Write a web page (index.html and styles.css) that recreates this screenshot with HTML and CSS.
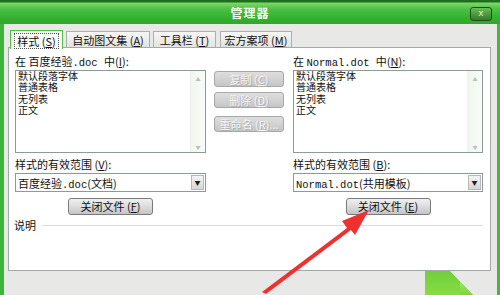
FILE: index.html
```html
<!DOCTYPE html>
<html>
<head>
    <meta charset="utf-8">
    <title>管理器</title>
    <link rel="stylesheet" href="styles.css">
</head>
<body>
    <div class="window">
        <div class="titlebar">
            <span class="title">管理器</span>
            <span class="close">x</span>
        </div>

        <!-- tabs -->
        <div class="tabs">
            <div class="tab active t1"><span class="focus">样式 (<u>S</u>)</span></div>
            <div class="tab t2">自动图文集 (<u>A</u>)</div>
            <div class="tab t3">工具栏 (<u>T</u>)</div>
            <div class="tab t4">宏方案项 (<u>M</u>)</div>
        </div>

        <div class="panel">
            <div class="grid">
                <div class="label">在 百度经验<span class="mono">.doc </span>中(<u>I</u>):</div>
                <div></div>
                <div class="label">在 <span class="mono">Normal.dot </span>中(<u>N</u>):</div>

                <div class="listbox">
                    <ul>
                        <li>默认段落字体</li>
                        <li>普通表格</li>
                        <li>无列表</li>
                        <li>正文</li>
                    </ul>
                    <div class="scroll"><span>&#9650;</span><span>&#9660;</span></div>
                </div>
                <div class="mid-buttons">
                    <button class="btn" disabled>复制 (<u>C</u>)</button>
                    <button class="btn" disabled>删除 (<u>D</u>)</button>
                    <button class="btn" disabled>重命名 (<u>R</u>)...</button>
                </div>
                <div class="listbox">
                    <ul>
                        <li>默认段落字体</li>
                        <li>普通表格</li>
                        <li>无列表</li>
                        <li>正文</li>
                    </ul>
                    <div class="scroll"><span>&#9650;</span><span>&#9660;</span></div>
                </div>

                <div class="label low">样式的有效范围 (<u>V</u>):</div>
                <div></div>
                <div class="label low">样式的有效范围 (<u>B</u>):</div>

                <div class="combo">
                    <span class="value">百度经验<span class="mono">.doc</span>(文档)</span>
                    <span class="drop">&#9660;</span>
                </div>
                <div></div>
                <div class="combo">
                    <span class="value"><span class="mono">Normal.dot</span>(共用模板)</span>
                    <span class="drop">&#9660;</span>
                </div>

                <div class="center"><button class="btn wide">关闭文件 (<u>F</u>)</button></div>
                <div></div>
                <div class="center"><button class="btn wide">关闭文件 (<u>E</u>)</button></div>
            </div>

            <div class="desc">
                <span>说明</span>
                <span class="rule"></span>
            </div>
        </div>

        <div class="bottom">
            <div class="other"></div>
        </div>
    </div>

    <!-- red pointer arrow -->
    <svg class="arrow" width="500" height="295" viewBox="0 0 500 295">
        <path d="M262 292 L347 228 L342 221 L369 210 L355 235 L351 230 L266 294 Z" fill="#ee3030"/>
    </svg>
</body>
</html>
```

FILE: styles.css
```css
body {
    margin: 0;
    width: 500px;
    height: 295px;
    overflow: hidden;
    font-family: "Noto Sans CJK SC", "Liberation Sans", sans-serif;
    font-size: 11px;
    color: #111;
}

u {
    text-decoration: underline;
}

.window {
    height: 295px;
    background-color: #e8e8e6;
    border-left: 4px solid #3fb43a;
    border-right: 3px solid #44b83c;
    box-sizing: border-box;
    display: flex;
    flex-direction: column;
}

/* Title bar */
.titlebar {
    height: 24px;
    flex: none;
    margin: 0 -3px 0 -4px;
    background: linear-gradient(to bottom, #1d6e1d 0, #1d6e1d 2px, #7ed86a 3px, #4cc043 9px, #35b030 18px, #2ea82a 24px);
    display: flex;
    align-items: center;
    justify-content: center;
    position: relative;
}

.title {
    color: #f4fff0;
    font-size: 12px;
    font-weight: bold;
    letter-spacing: 1px;
}

.close {
    position: absolute;
    right: 8px;
    top: 7px;
    width: 20px;
    height: 12px;
    border: 1px solid #1f4f1a;
    border-radius: 3px;
    background: linear-gradient(to bottom, #6cbc58, #2f7d26);
    color: #d8f0d0;
    font-size: 9px;
    line-height: 11px;
    text-align: center;
    font-family: "DejaVu Sans", sans-serif;
}

/* Tabs */
.tabs {
    display: flex;
    gap: 3px;
    padding: 6px 0 0 6px;
    height: 23px;
    box-sizing: border-box;
    flex: none;
}

.tab {
    height: 17px;
    border: 1px solid #a9b0b0;
    border-bottom: none;
    background: linear-gradient(to bottom, #f6f6f4, #e2e2de);
    font-size: 11px;
    line-height: 17px;
    margin-top: 1px;
    text-align: center;
    box-sizing: border-box;
}

.t1 { width: 53px; }
.t2 { width: 84px; }
.t3 { width: 63px; }
.t4 { width: 72px; margin-left: 1px; }

.tab.active {
    height: 19px;
    margin-top: 0;
    background: #fafafa;
    border-color: #4fc244;
    position: relative;
    z-index: 1;
}

.focus {
    display: inline-block;
    line-height: 14px;
    margin-top: 2px;
    padding: 0 2px;
    border: 1px dotted #555;
}

/* Panel */
.panel {
    flex: none;
    height: 224px;
    margin: 0 6px 0 4px;
    background: #fff;
    border: 1px solid #a4a8a8;
    box-sizing: border-box;
    padding: 6px 7px 0 5px;
}

.grid {
    display: grid;
    grid-template-columns: 191px 70px 191px;
    column-gap: 8px;
    padding-left: 1px;
}

.grid > :nth-child(3n) {
    margin-left: 1px;
}

.label {
    height: 16px;
    line-height: 14px;
    font-size: 11px;
}

.label.low {
    margin-top: 4px;
}

.mono {
    font-family: "Liberation Mono", monospace;
    font-size: 10.5px;
}

.listbox {
    height: 83px;
    border: 1px solid #8e9a9a;
    box-sizing: border-box;
    display: flex;
}

.listbox ul {
    list-style: none;
    margin: 0;
    padding: 0 2px;
    flex: 1;
}

.listbox li {
    font-family: "Liberation Sans", "Noto Sans CJK SC", sans-serif;
    line-height: 11.3px;
    font-size: 10px;
}

.scroll {
    width: 14px;
    background: linear-gradient(to right, #f1f6f0, #f8fbf7);
    border-left: 1px solid #eef2ee;
    display: flex;
    flex-direction: column;
    justify-content: space-between;
    align-items: center;
    font-size: 5px;
    color: #b8c0b8;
    padding: 4px 0 2px;
}

.mid-buttons {
    display: flex;
    flex-direction: column;
    gap: 5px;
    padding-top: 1px;
}

.btn {
    height: 16px;
    width: 70px;
    padding: 0;
    border: 1px solid #7a7a7a;
    border-radius: 3px;
    background: linear-gradient(to bottom, #f0f0f0, #d8d8d8 60%, #c4c4c4);
    font-family: "Noto Sans CJK SC", sans-serif;
    font-size: 11px;
    line-height: 13px;
    color: #111;
}

.btn:disabled {
    color: #f4f4f4;
    border-color: #a8a8a8;
    background: linear-gradient(to bottom, #dedede, #c6c6c6);
    text-shadow: 1px 1px 0 #b0b0b0;
}

.mid-buttons .btn:nth-child(3) {
    margin-top: 3px;
}

.combo {
    height: 19px;
    border: 1px solid #8e9a9a;
    box-sizing: border-box;
    display: flex;
    align-items: center;
    padding-left: 2px;
}

.combo .value {
    flex: 1;
    font-size: 11px;
}

.drop {
    width: 13px;
    height: 15px;
    margin-right: 1px;
    background: linear-gradient(to bottom, #f4f4f4, #d6d6d6);
    border: 1px solid #b8b8b8;
    box-sizing: border-box;
    font-size: 6px;
    line-height: 13px;
    text-align: center;
    color: #222;
}

.center {
    display: flex;
    justify-content: center;
    padding-top: 6px;
}

.btn.wide {
    width: 85px;
    height: 17px;
}

.desc {
    display: flex;
    align-items: center;
    gap: 6px;
    margin-top: 2px;
    font-size: 11px;
}

.rule {
    flex: 1;
    height: 1px;
    background: #dcdcdc;
    margin-top: 1px;
}

/* Bottom strip */
.bottom {
    flex: 1;
    display: flex;
    justify-content: flex-end;
    align-items: flex-end;
    padding-right: 5px;
}

.other {
    width: 67px;
    height: 24px;
    background: linear-gradient(to bottom, #6fd03a, #86dc44);
    clip-path: polygon(0 0, 25px 0, 48px 24px, 0 24px);
    position: relative;
}

.other::after {
    content: "";
    position: absolute;
    right: 0;
    top: 8px;
    width: 32px;
    height: 16px;
    background: linear-gradient(to bottom, #a6e870, #7ad440);
}

.arrow {
    position: absolute;
    left: 0;
    top: 0;
}
```
